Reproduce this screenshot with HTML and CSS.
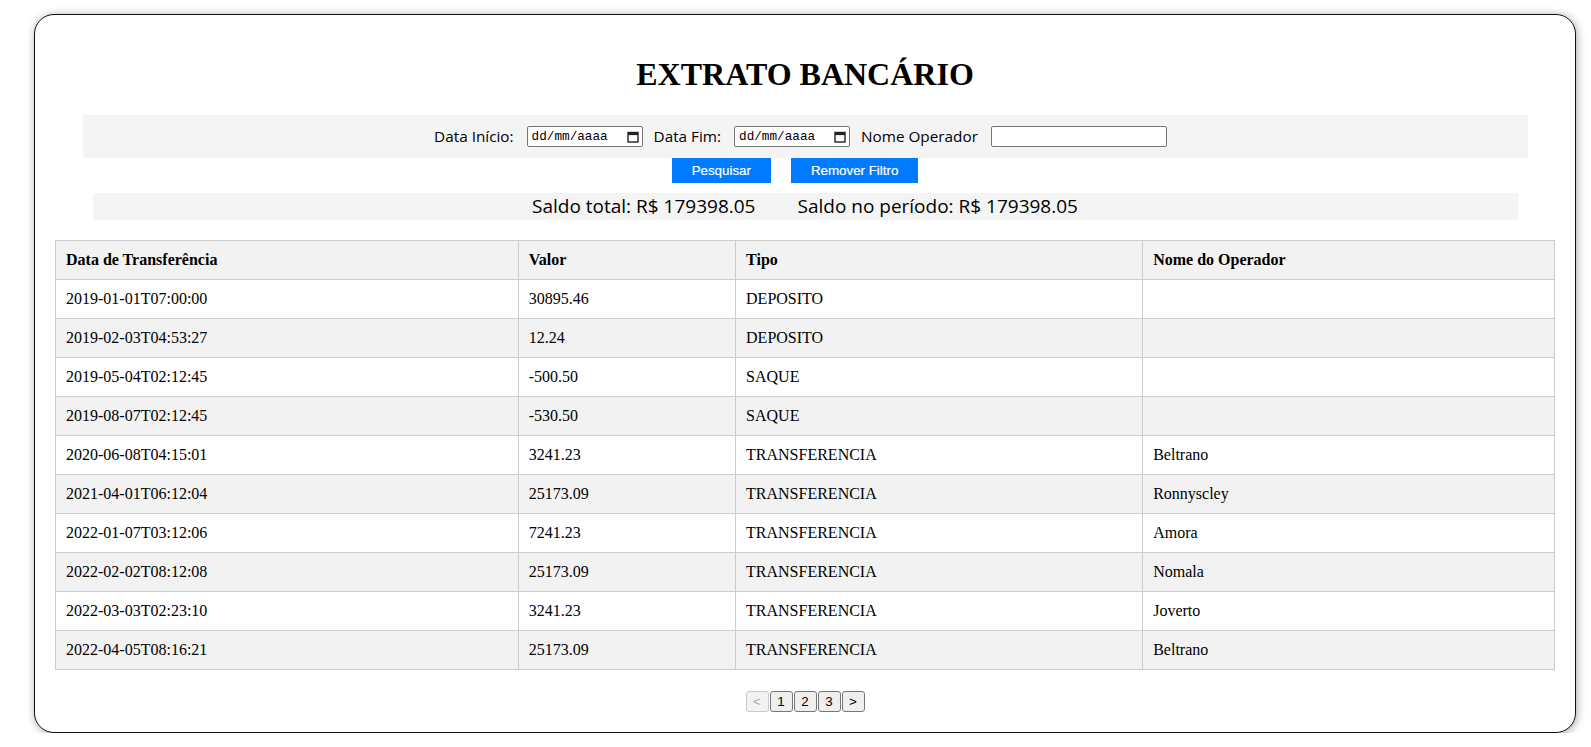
FILE: index.html
```html
<!DOCTYPE html>
<html lang="pt-BR">
<head>
<meta charset="utf-8">
<title>Extrato Bancário</title>
<link rel="stylesheet" href="styles.css">
</head>
<body>
<div class="card">
  <h1 class="title">EXTRATO BANCÁRIO</h1>
  <div class="filters">
    <span class="lbl">Data Início:</span>
    <span class="date-field"><span class="date-text">dd/mm/aaaa</span><svg class="cal" width="12" height="12" viewBox="0 0 12 12"><rect x="1" y="1.5" width="10" height="9.5" fill="none" stroke="#222" stroke-width="1.4"/><rect x="1" y="1.5" width="10" height="2.6" fill="#222"/></svg></span>
    <span class="lbl">Data Fim:</span>
    <span class="date-field"><span class="date-text">dd/mm/aaaa</span><svg class="cal" width="12" height="12" viewBox="0 0 12 12"><rect x="1" y="1.5" width="10" height="9.5" fill="none" stroke="#222" stroke-width="1.4"/><rect x="1" y="1.5" width="10" height="2.6" fill="#222"/></svg></span>
    <span class="lbl">Nome Operador</span>
    <input class="text-field" type="text">
  </div>
  <div class="actions">
    <button class="btn">Pesquisar</button>
    <button class="btn">Remover Filtro</button>
  </div>
  <div class="saldo">
    <span>Saldo total: R$ 179398.05</span>
    <span>Saldo no período: R$ 179398.05</span>
  </div>
  <table class="extrato">
    <thead>
      <tr><th>Data de Transferência</th><th>Valor</th><th>Tipo</th><th>Nome do Operador</th></tr>
    </thead>
    <tbody>
      <tr><td>2019-01-01T07:00:00</td><td>30895.46</td><td>DEPOSITO</td><td></td></tr>
      <tr><td>2019-02-03T04:53:27</td><td>12.24</td><td>DEPOSITO</td><td></td></tr>
      <tr><td>2019-05-04T02:12:45</td><td>-500.50</td><td>SAQUE</td><td></td></tr>
      <tr><td>2019-08-07T02:12:45</td><td>-530.50</td><td>SAQUE</td><td></td></tr>
      <tr><td>2020-06-08T04:15:01</td><td>3241.23</td><td>TRANSFERENCIA</td><td>Beltrano</td></tr>
      <tr><td>2021-04-01T06:12:04</td><td>25173.09</td><td>TRANSFERENCIA</td><td>Ronnyscley</td></tr>
      <tr><td>2022-01-07T03:12:06</td><td>7241.23</td><td>TRANSFERENCIA</td><td>Amora</td></tr>
      <tr><td>2022-02-02T08:12:08</td><td>25173.09</td><td>TRANSFERENCIA</td><td>Nomala</td></tr>
      <tr><td>2022-03-03T02:23:10</td><td>3241.23</td><td>TRANSFERENCIA</td><td>Joverto</td></tr>
      <tr><td>2022-04-05T08:16:21</td><td>25173.09</td><td>TRANSFERENCIA</td><td>Beltrano</td></tr>
    </tbody>
  </table>
  <div class="pager">
    <button class="pg" disabled>&lt;</button>
    <button class="pg">1</button>
    <button class="pg">2</button>
    <button class="pg">3</button>
    <button class="pg">&gt;</button>
  </div>
</div>
</body>
</html>
```
FILE: styles.css
```css
html, body {
  margin: 0;
  padding: 0;
  background: #ffffff;
}
body {
  font-family: "Liberation Serif", "Times New Roman", serif;
  color: #000;
}
.card {
  margin: 14px 15px 0 34px;
  padding: 20px;
  border: 1px solid #111;
  border-radius: 20px;
  box-shadow: 1px 1px 9px rgba(0,0,0,0.35);
  background: #fff;
}
.title {
  margin: 21px 0 22px;
  font-size: 32px;
  font-weight: bold;
  text-align: center;
  line-height: 37px;
}
.filters {
  margin: 0 27px 0 28px;
  padding: 11px 0;
  background: #f4f4f4;
  display: flex;
  justify-content: center;
  align-items: center;
  font-family: "Open Sans", "Noto Sans", sans-serif;
  font-size: 15.3px;
  line-height: 21px;
}
.lbl {
  margin-right: 13px;
}
.date-field {
  box-sizing: border-box;
  width: 116px;
  height: 21px;
  border: 1px solid #767676;
  border-radius: 2px;
  background: #fff;
  display: flex;
  align-items: center;
  justify-content: space-between;
  padding: 0 3px 0 4px;
  margin-right: 11px;
}
.date-text {
  font-family: "Liberation Mono", "DejaVu Sans Mono", monospace;
  font-size: 12.7px;
  color: #000;
}
.cal { display: block; }
.text-field {
  box-sizing: border-box;
  width: 176px;
  height: 21px;
  border: 1px solid #767676;
  border-radius: 2px;
  margin: 0 10px 0 0;
  padding: 1px 2px;
  background: #fff;
}
.actions {
  display: flex;
  justify-content: center;
}
.btn {
  height: 25px;
  padding: 0 20px;
  margin: 0 20px 0 0;
  border: none;
  border-radius: 0;
  background: #007bff;
  color: #fff;
  font-family: "Liberation Sans", Arial, sans-serif;
  font-size: 13.33px;
  -webkit-text-stroke: 0.2px #fff;
}
.saldo {
  width: 95%;
  margin: 10px auto 0;
  background: #f4f4f4;
  display: flex;
  justify-content: center;
  gap: 42px;
  font-family: "Open Sans", "Noto Sans", sans-serif;
  font-size: 19px;
  line-height: 27px;
}
.extrato {
  width: 100%;
  margin-top: 20px;
  border-collapse: collapse;
  font-size: 16px;
}
.extrato th, .extrato td {
  border: 1px solid #cccccc;
  padding: 10px;
  text-align: left;
  height: 18px;
  line-height: 18px;
}
.extrato th {
  background: #f2f2f2;
  font-weight: bold;
}
.extrato tbody tr:nth-child(even) td {
  background: #f2f2f2;
}
.pager {
  margin-top: 21px;
  display: flex;
  justify-content: center;
  gap: 1px;
}
.pg {
  box-sizing: border-box;
  height: 21px;
  min-width: 23px;
  padding: 0 6px;
  border: 1px solid #767676;
  border-radius: 3px;
  background: #efefef;
  color: #000;
  font-family: "Liberation Sans", Arial, sans-serif;
  font-size: 13.33px;
}
.pg:disabled {
  border-color: #c8c8c8;
  background: #f3f3f3;
  color: #a8a8a8;
}
```
